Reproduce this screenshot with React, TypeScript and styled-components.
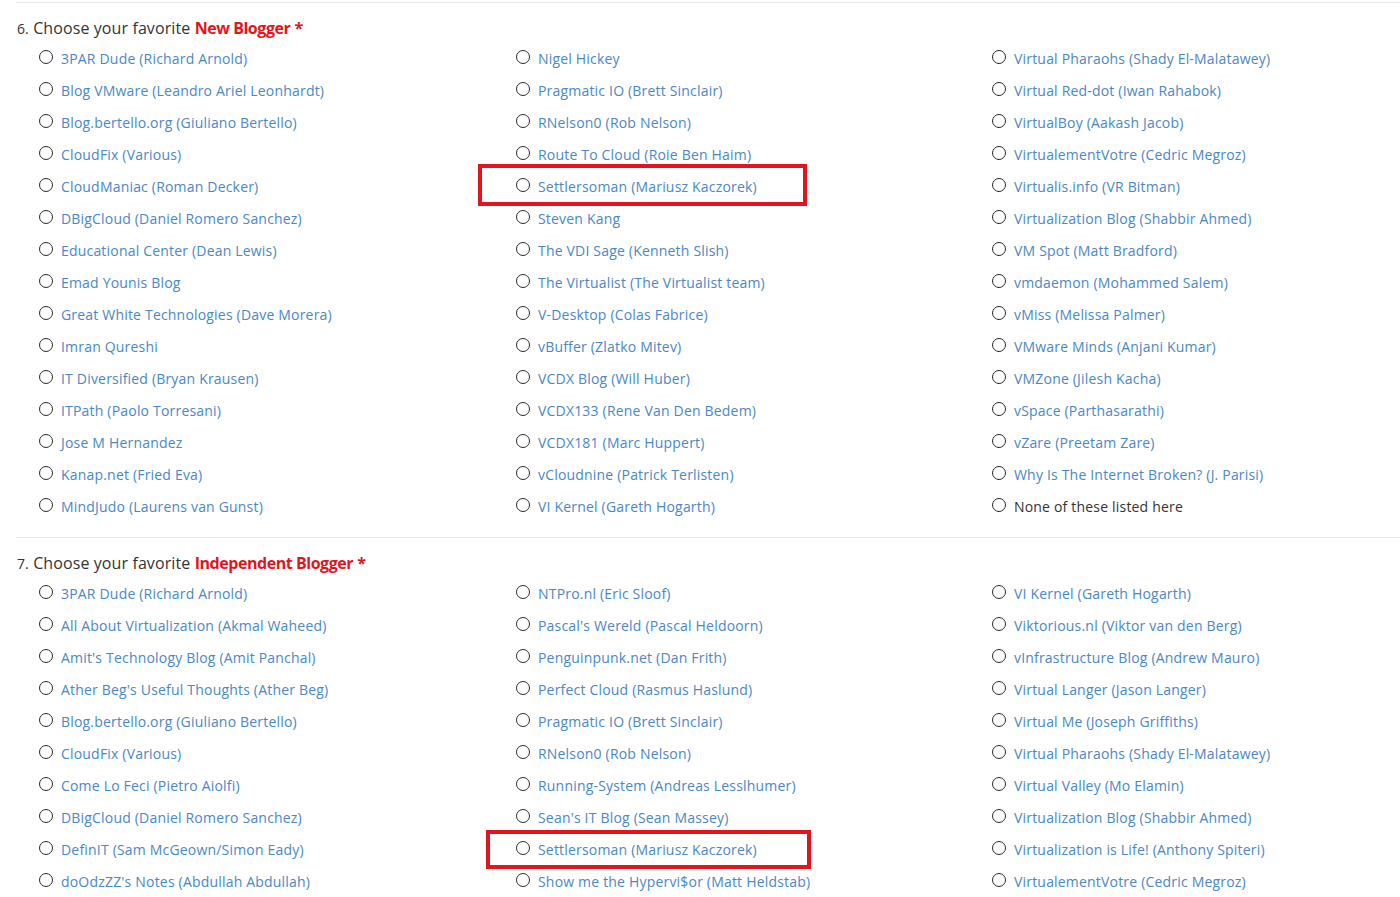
import React from "react";
import styled, { createGlobalStyle } from "styled-components";

const GlobalStyle = createGlobalStyle`
  html, body { margin: 0; padding: 0; background: #fff; }
  body { font-family: "Open Sans", "Noto Sans", sans-serif; color: #333; overflow: hidden; }
`;

const Page = styled.div`
  padding-left: 16px;
  padding-top: 2px;
  width: 1384px;
`;

const Section = styled.section`
  border-top: 1px solid #e6e6e6;
  padding: 13px 0 15px 0;
`;

const Heading = styled.div`
  height: 24px;
  line-height: 24px;
  font-size: 16px;
  letter-spacing: 0.1px;
  color: #333;
  padding-left: 1px;
  white-space: nowrap;
`;

const Num = styled.span`
  font-size: 14px;
`;

const Accent = styled.span`
  color: #e3151c;
  font-weight: 700;
  letter-spacing: -0.45px;
`;

const Grid = styled.div<{ $rows: number }>`
  margin-top: 2px;
  padding-left: 23px;
  display: grid;
  grid-auto-flow: column;
  grid-template-columns: 477px 476px 1fr;
  grid-template-rows: repeat(${(p) => p.$rows}, 32px);
`;

const Option = styled.label`
  position: relative;
  display: flex;
  align-items: center;
  gap: 8px;
  height: 32px;
  white-space: nowrap;
`;

const Radio = styled.span`
  box-sizing: border-box;
  width: 14px;
  height: 14px;
  border: 1.5px solid #2b2b2b;
  border-radius: 50%;
  flex: none;
  margin-bottom: 3px;
`;

const OptText = styled.span<{ $plain?: boolean }>`
  font-size: 14px;
  line-height: 20px;
  padding-top: 2px;
  letter-spacing: 0.19px;
  color: ${(p) => (p.$plain ? "#333" : "#4a88c6")};
`;

const Highlight = styled.span<{ $l: number; $t: number; $w: number; $h: number }>`
  position: absolute;
  box-sizing: border-box;
  left: ${(p) => p.$l}px;
  top: ${(p) => p.$t}px;
  width: ${(p) => p.$w}px;
  height: ${(p) => p.$h}px;
  border: 4px solid #e2151f;
  pointer-events: none;
`;

type Item = { text: string; plain?: boolean; box?: { l: number; t: number; w: number; h: number } };

const s6: Item[] = [
  "3PAR Dude (Richard Arnold)",
  "Blog VMware (Leandro Ariel Leonhardt)",
  "Blog.bertello.org (Giuliano Bertello)",
  "CloudFix (Various)",
  "CloudManiac (Roman Decker)",
  "DBigCloud (Daniel Romero Sanchez)",
  "Educational Center (Dean Lewis)",
  "Emad Younis Blog",
  "Great White Technologies (Dave Morera)",
  "Imran Qureshi",
  "IT Diversified (Bryan Krausen)",
  "ITPath (Paolo Torresani)",
  "Jose M Hernandez",
  "Kanap.net (Fried Eva)",
  "MindJudo (Laurens van Gunst)",
  "Nigel Hickey",
  "Pragmatic IO (Brett Sinclair)",
  "RNelson0 (Rob Nelson)",
  "Route To Cloud (Roie Ben Haim)",
  "Settlersoman (Mariusz Kaczorek)",
  "Steven Kang",
  "The VDI Sage (Kenneth Slish)",
  "The Virtualist (The Virtualist team)",
  "V-Desktop (Colas Fabrice)",
  "vBuffer (Zlatko Mitev)",
  "VCDX Blog (Will Huber)",
  "VCDX133 (Rene Van Den Bedem)",
  "VCDX181 (Marc Huppert)",
  "vCloudnine (Patrick Terlisten)",
  "VI Kernel (Gareth Hogarth)",
  "Virtual Pharaohs (Shady El-Malatawey)",
  "Virtual Red-dot (Iwan Rahabok)",
  "VirtualBoy (Aakash Jacob)",
  "VirtualementVotre (Cedric Megroz)",
  "Virtualis.info (VR Bitman)",
  "Virtualization Blog (Shabbir Ahmed)",
  "VM Spot (Matt Bradford)",
  "vmdaemon (Mohammed Salem)",
  "vMiss (Melissa Palmer)",
  "VMware Minds (Anjani Kumar)",
  "VMZone (Jilesh Kacha)",
  "vSpace (Parthasarathi)",
  "vZare (Preetam Zare)",
  "Why Is The Internet Broken? (J. Parisi)",
].map((text) => ({ text } as Item));
s6[19].box = { l: -38, t: -6, w: 329, h: 42 };
s6.push({ text: "None of these listed here", plain: true });

const s7: Item[] = [
  "3PAR Dude (Richard Arnold)",
  "All About Virtualization (Akmal Waheed)",
  "Amit's Technology Blog (Amit Panchal)",
  "Ather Beg's Useful Thoughts (Ather Beg)",
  "Blog.bertello.org (Giuliano Bertello)",
  "CloudFix (Various)",
  "Come Lo Feci (Pietro Aiolfi)",
  "DBigCloud (Daniel Romero Sanchez)",
  "DefinIT (Sam McGeown/Simon Eady)",
  "doOdzZZ's Notes (Abdullah Abdullah)",
  "NTPro.nl (Eric Sloof)",
  "Pascal's Wereld (Pascal Heldoorn)",
  "Penguinpunk.net (Dan Frith)",
  "Perfect Cloud (Rasmus Haslund)",
  "Pragmatic IO (Brett Sinclair)",
  "RNelson0 (Rob Nelson)",
  "Running-System (Andreas Lesslhumer)",
  "Sean's IT Blog (Sean Massey)",
  "Settlersoman (Mariusz Kaczorek)",
  "Show me the Hypervi$or (Matt Heldstab)",
  "VI Kernel (Gareth Hogarth)",
  "Viktorious.nl (Viktor van den Berg)",
  "vInfrastructure Blog (Andrew Mauro)",
  "Virtual Langer (Jason Langer)",
  "Virtual Me (Joseph Griffiths)",
  "Virtual Pharaohs (Shady El-Malatawey)",
  "Virtual Valley (Mo Elamin)",
  "Virtualization Blog (Shabbir Ahmed)",
  "Virtualization is Life! (Anthony Spiteri)",
  "VirtualementVotre (Cedric Megroz)",
].map((text) => ({ text } as Item));
s7[18].box = { l: -30, t: -3, w: 325, h: 39 };

const Question: React.FC<{ num: string; accent: string; items: Item[]; rows: number }> = ({
  num,
  accent,
  items,
  rows,
}) => (
  <Section>
    <Heading>
      <Num>{num}.</Num> Choose your favorite <Accent>{accent}</Accent> <Accent>*</Accent>
    </Heading>
    <Grid $rows={rows}>
      {items.map((it, i) => (
        <Option key={i}>
          <Radio />
          <OptText $plain={it.plain}>{it.text}</OptText>
          {it.box && <Highlight $l={it.box.l} $t={it.box.t} $w={it.box.w} $h={it.box.h} />}
        </Option>
      ))}
    </Grid>
  </Section>
);

export default function App() {
  return (
    <>
      <GlobalStyle />
      <Page>
        <Question num="6" accent="New Blogger" items={s6} rows={15} />
        <Question num="7" accent="Independent Blogger" items={s7} rows={10} />
      </Page>
    </>
  );
}
